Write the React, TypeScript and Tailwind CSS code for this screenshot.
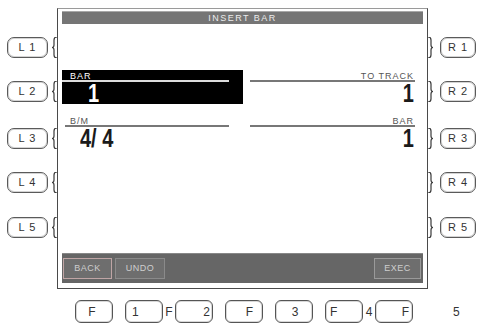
import React from "react";

const font = { fontFamily: '"Liberation Sans", Arial, sans-serif' };

function LeftBrace() {
  return (
    <svg width="5" height="21" viewBox="0 0 5 21" className="shrink-0">
      <path d="M5,0 Q2,0 2,3 L2,8 Q2,10.5 0,10.5 Q2,10.5 2,13 L2,18 Q2,21 5,21" fill="none" stroke="#3a3a3a" strokeWidth="1.2" />
    </svg>
  );
}

function RightBrace() {
  return (
    <svg width="5" height="21" viewBox="0 0 5 21" className="shrink-0">
      <path d="M0,0 Q3,0 3,3 L3,8 Q3,10.5 5,10.5 Q3,10.5 3,13 L3,18 Q3,21 0,21" fill="none" stroke="#3a3a3a" strokeWidth="1.2" />
    </svg>
  );
}

function SideButton({ label, w }: { label: string; w: string }) {
  return (
    <div
      className={`${w} h-[21px] rounded-[7px] border border-[#5a5a5a] bg-white shadow-[inset_0_0_0_1px_#d4d4d4] flex items-center justify-center text-[11px] text-[#333] tracking-[1px]`}
    >
      {label}
    </div>
  );
}

const tops = ["mt-[37px]", "mt-[23px]", "mt-[26px]", "mt-[23px]", "mt-[24px]"];

function FBox({ children, justify, pad }: { children?: React.ReactNode; justify: string; pad: string }) {
  return (
    <div
      className={`w-[38px] h-[23px] shrink-0 rounded-[6px] border border-[#555] shadow-[inset_0_0_0_1px_#d8d8d8] flex items-center ${justify} ${pad} text-[12px] text-[#333]`}
    >
      {children}
    </div>
  );
}

export default function App() {
  return (
    <div className="w-[484px] h-[326px] bg-white flex flex-col overflow-hidden" style={font}>
      <div className="flex h-[289px]">
        {/* Left column */}
        <div className="w-[57px] flex flex-col">
          {["L 1", "L 2", "L 3", "L 4", "L 5"].map((l, i) => (
            <div key={l} className={`flex items-center h-[21px] ${tops[i]}`}>
              <div className="ml-[7px]">
                <SideButton label={l} w="w-[41px]" />
              </div>
              <div className="ml-auto">
                <LeftBrace />
              </div>
            </div>
          ))}
        </div>

        {/* Screen */}
        <div className="mt-[8px] w-[371px] h-[281px] border border-[#4a4a4a] border-t-[#9a9a9a] bg-white flex flex-col px-[4px] pb-[5px]">
          <div className="mt-[2px] h-[13px] bg-[#757575] border-t border-[#a8a8a8] flex items-center justify-center text-[9px] leading-none tracking-[1.5px] text-[#ececec]">
            INSERT BAR
          </div>

          {/* Row 1 */}
          <div className="mt-[46px] flex gap-[7px]">
            <div className="w-[181px] h-[34px] bg-black pt-[2px] flex flex-col">
              <div className="h-[8px] leading-[8px] pl-[8px] text-[9px] tracking-[1px] text-white">BAR</div>
              <div className="w-[167px] h-[2px] bg-[#dcdcdc]" />
              <div className="h-[22px] leading-[22px] pl-[26px] text-[25px] font-bold text-white">
                <span className="inline-block origin-left scale-x-[0.8]">1</span>
              </div>
            </div>
            <div className="w-[165px] pt-[2px] flex flex-col">
              <div className="h-[8px] leading-[8px] text-right pr-[1px] text-[9px] tracking-[1px] text-[#555]">TO TRACK</div>
              <div className="w-[165px] h-[2px] bg-[#777]" />
              <div className="h-[22px] leading-[22px] text-right pr-[1px] text-[25px] font-bold text-[#1a1a1a]">
                <span className="inline-block origin-right scale-x-[0.8]">1</span>
              </div>
            </div>
          </div>

          {/* Row 2 */}
          <div className="mt-[11px] flex gap-[7px]">
            <div className="w-[181px] pt-[2px] flex flex-col">
              <div className="h-[8px] leading-[8px] pl-[8px] text-[9px] tracking-[1px] text-[#555]">B/M</div>
              <div className="ml-[3px] w-[164px] h-[2px] bg-[#777]" />
              <div className="h-[22px] leading-[22px] pl-[18px] text-[25px] font-bold text-[#1a1a1a] whitespace-pre">
                <span className="inline-block origin-left scale-x-[0.8]">4/ 4</span>
              </div>
            </div>
            <div className="w-[165px] pt-[2px] flex flex-col">
              <div className="h-[8px] leading-[8px] text-right pr-[1px] text-[9px] tracking-[1px] text-[#555]">BAR</div>
              <div className="w-[165px] h-[2px] bg-[#777]" />
              <div className="h-[22px] leading-[22px] text-right pr-[1px] text-[25px] font-bold text-[#1a1a1a]">
                <span className="inline-block origin-right scale-x-[0.8]">1</span>
              </div>
            </div>
          </div>

          {/* Bottom bar */}
          <div className="mt-auto h-[30px] bg-[#666] border-t border-[#888] flex items-center px-[1px]">
            <div className="w-[49px] h-[21px] bg-[#6e6e6e] border border-[#bfa5a5] flex items-center justify-center text-[9px] tracking-[0.5px] text-[#cfcfcf]">
              BACK
            </div>
            <div className="ml-[3px] w-[50px] h-[21px] bg-[#6e6e6e] border border-[#8a8a8a] flex items-center justify-center text-[9px] tracking-[0.5px] text-[#cfcfcf]">
              UNDO
            </div>
            <div className="ml-auto mr-[1px] w-[47px] h-[21px] bg-[#6e6e6e] border border-[#9a9a9a] flex items-center justify-center text-[9px] tracking-[0.5px] text-[#cfcfcf]">
              EXEC
            </div>
          </div>
        </div>

        {/* Right column */}
        <div className="w-[56px] flex flex-col">
          {["R 1", "R 2", "R 3", "R 4", "R 5"].map((l, i) => (
            <div key={l} className={`flex items-center h-[21px] ${tops[i]}`}>
              <RightBrace />
              <div className="ml-[7px]">
                <SideButton label={l} w="w-[36px]" />
              </div>
            </div>
          ))}
        </div>
      </div>

      {/* F row */}
      <div className="mt-[11px] flex items-center h-[23px] text-[12px] text-[#333]">
        <div className="ml-[75px]">
          <FBox justify="justify-center" pad="pr-[4px]">F</FBox>
        </div>
        <div className="ml-[12px]">
          <FBox justify="justify-start" pad="pl-[6px]">1</FBox>
        </div>
        <div className="w-[12px] text-center">F</div>
        <FBox justify="justify-end" pad="pr-[2px]">2</FBox>
        <div className="ml-[12px]">
          <FBox justify="justify-end" pad="pr-[9px]">F</FBox>
        </div>
        <div className="ml-[12px]">
          <FBox justify="justify-center" pad="pl-[2px]">3</FBox>
        </div>
        <div className="ml-[12px]">
          <FBox justify="justify-start" pad="pl-[4px]">F</FBox>
        </div>
        <div className="w-[12px] text-center">4</div>
        <FBox justify="justify-end" pad="pr-[3px]">F</FBox>
        <div className="ml-[40px]">5</div>
      </div>
    </div>
  );
}
